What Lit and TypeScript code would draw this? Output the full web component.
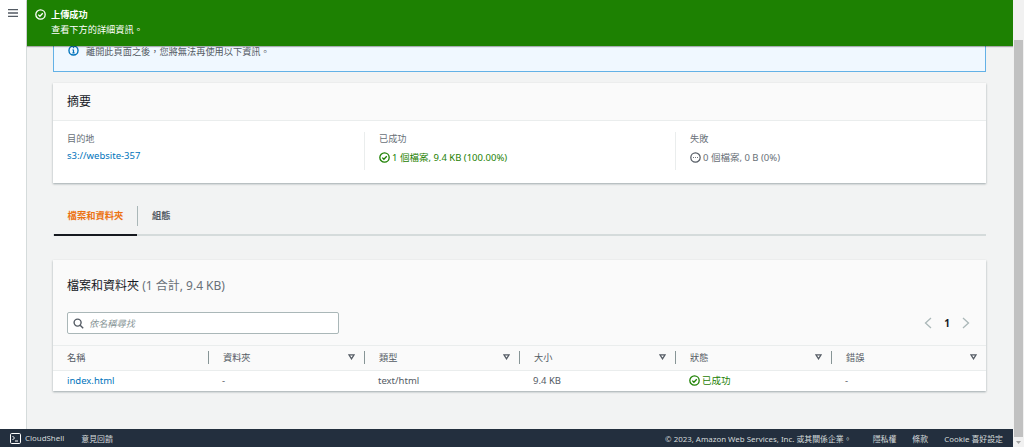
import { LitElement, html, css } from "lit";
import { customElement } from "lit/decorators.js";

const check = (color: string, size = 11) => html`<svg class="ic" width=${size} height=${size} viewBox="0 0 16 16" fill="none" stroke=${color} stroke-width="1.9"><circle cx="8" cy="8" r="6.8"/><path d="M4.8 8.2l2.3 2.3 4.2-4.4"/></svg>`;
const caret = html`<svg class="caret" width="7" height="6" viewBox="0 0 8 7" fill="none" stroke="#545b64" stroke-width="1.5"><path d="M1 1h6L4 5.6z"/></svg>`;

const cols = ["資料夾", "類型", "大小", "狀態", "錯誤"];

@customElement("app-root")
export class AppRoot extends LitElement {
  static styles = css`
    :host { display: block; width: 1024px; height: 447px; overflow: hidden; font-family: "Noto Sans", "Noto Sans CJK TC", sans-serif; font-size: 9.5px; color: #16191f; }
    .frame { display: flex; height: 447px; background: #f1f1f1; }
    .page { width: 1013px; display: flex; flex-direction: column; flex: none; }
    .scroll { flex: 1; display: flex; flex-direction: column; padding: 40px 1px 0 1px; box-sizing: border-box; }
    .thumb { flex: 1; background: #c1c1c1; }
    .arrow { height: 10px; display: flex; align-items: center; justify-content: center; }
    .body { flex: 1; min-height: 0; display: flex; position: relative; overflow: hidden; background: #f2f3f3; }
    .side { width: 26px; background: #fff; border-right: 1px solid #d5dbdb; flex: none; display: flex; justify-content: center; padding-top: 9px; }
    .main { flex: 1; min-width: 0; padding: 0 27px 0 26px; display: flex; flex-direction: column; }
    .flash { position: absolute; left: 27px; right: 0; top: 0; height: 46px; background: #1d8102; color: #fff; display: flex; gap: 5px; padding: 7px 0 0 8px; box-sizing: border-box; box-shadow: 0 1px 1px rgba(0,0,0,.3); font-size: 9.2px; }
    .flash .t { font-weight: 700; line-height: 15px; }
    .flash .d { line-height: 15px; }
    .flash .ic { margin-top: 2px; }
    .alert { height: 72px; box-sizing: border-box; flex: none; border: 1px solid #63b1e6; border-top: 0; background: #f0f8ff; display: flex; align-items: flex-start; gap: 7px; padding: 45px 0 0 14px; color: #545b64; line-height: 14px; font-size: 9.2px; }
    .card { background: #fff; box-shadow: 0 1px 2px rgba(0,28,36,.35); }
    .summary { margin-top: 11px; height: 100px; display: flex; flex-direction: column; }
    .chead { height: 38px; flex: none; background: #fafafa; border-bottom: 1px solid #eaeded; box-sizing: border-box; padding-left: 14px; font-size: 12px; line-height: 37px; }
    .cols { display: grid; grid-template-columns: repeat(3, 1fr); padding-top: 11px; }
    .col { height: 38px; box-sizing: border-box; padding: 1px 0 0 14px; border-left: 1px solid #eaeded; }
    .col:first-child { border-left: 0; }
    .lab { color: #687078; line-height: 12px; font-size: 9.2px; }
    .val { margin-top: 5px; line-height: 15px; display: flex; align-items: center; gap: 2px; }
    .val.dest { margin-top: 3px; }
    .link { color: #0073bb; }
    .ok { color: #1d8102; }
    .mut { color: #687078; }
    .tabs { margin-top: 23px; height: 30px; box-sizing: border-box; padding-left: 1px; display: flex; border-bottom: 2px solid #d5dbdb; flex: none; }
    .tab { width: 83px; height: 30px; box-sizing: border-box; flex: none; border-bottom: 2px solid #16191f; color: #ec7211; font-weight: 700; font-size: 9.3px; line-height: 20px; text-align: center; }
    .sep { width: 1px; height: 20px; background: #aab7b8; flex: none; }
    .tab2 { padding-left: 14px; color: #545b64; font-size: 9.3px; font-weight: 700; line-height: 20px; }
    .files { margin-top: 24px; height: 131px; display: flex; flex-direction: column; }
    .top { height: 85px; flex: none; background: #fafafa; padding: 0 14px; box-sizing: border-box; display: flex; flex-direction: column; }
    .title { margin-top: 18px; font-size: 12px; line-height: 16px; }
    .title span { color: #687078; }
    .tool { margin-top: 18px; display: flex; justify-content: space-between; align-items: center; }
    .search { width: 272px; height: 22px; box-sizing: border-box; background: #fff; border: 1px solid #aab7b8; border-radius: 2px; display: flex; align-items: center; gap: 5px; padding-left: 5px; color: #879596; font-style: italic; font-size: 9.2px; }
    .pager { display: flex; align-items: center; gap: 12px; font-weight: 700; font-size: 10px; margin-right: 2px; }
    .thead, .row { display: grid; grid-template-columns: 155px 156px 155px 156px 156px 1fr; align-items: center; }
    .thead { height: 26px; flex: none; padding-bottom: 2px; background: #fafafa; border-top: 1px solid #eaeded; border-bottom: 1px solid #eaeded; box-sizing: border-box; color: #545b64; font-size: 9.2px; }
    .th { display: flex; align-items: center; justify-content: space-between; height: 13px; padding: 0 9px 0 14px; border-left: 1px solid #879596; }
    .th:first-child { border-left: 0; }
    .row { height: 20px; box-sizing: border-box; padding-bottom: 2px; color: #545b64; }
    .td { padding-left: 14px; display: flex; align-items: center; gap: 2px; }
    .foot { height: 18px; flex: none; background: #232f3e; color: #d5dbdb; font-size: 7.9px; display: flex; align-items: center; padding: 0 10px; }
    .foot .cs { display: flex; align-items: center; gap: 4px; margin-right: 17px; }
    .foot .r { margin-left: auto; display: flex; gap: 16px; }
    .foot .copy { margin-right: 5px; }
    .ic, .caret { flex: none; }
  `;

  render() {
    return html`<div class="frame">
      <div class="page">
        <div class="body">
          <div class="side">
            <svg width="10" height="8" viewBox="0 0 10 8" fill="none" stroke="#545b64" stroke-width="1.3"><path d="M0 .7h10M0 4h10M0 7.3h10"/></svg>
          </div>
          <div class="main">
            <div class="alert">
              <svg class="ic info" width="11" height="11" viewBox="0 0 16 16" fill="none" stroke="#0073bb"><circle cx="8" cy="8" r="6.6" stroke-width="2"/><path d="M8 7v4.5M6.4 11.5h3.2M6.6 7H8" stroke-width="1.7"/><path d="M7 3.8h2" stroke-width="1.8"/></svg>
              <span>離開此頁面之後，您將無法再使用以下資訊。</span>
            </div>
            <div class="card summary">
              <div class="chead">摘要</div>
              <div class="cols">
                <div class="col"><div class="lab">目的地</div><div class="val dest link">s3://website-357</div></div>
                <div class="col"><div class="lab">已成功</div><div class="val ok">${check("#1d8102")}1 個檔案, 9.4 KB (100.00%)</div></div>
                <div class="col"><div class="lab">失敗</div><div class="val mut"><svg class="ic" width="11" height="11" viewBox="0 0 16 16" fill="none" stroke="#545b64" stroke-width="1.8"><circle cx="8" cy="8" r="6.8"/><path d="M4.6 8h1.2M7.4 8h1.2M10.2 8h1.2"/></svg>0 個檔案, 0 B (0%)</div></div>
              </div>
            </div>
            <div class="tabs">
              <div class="tab">檔案和資料夾</div>
              <div class="sep"></div>
              <div class="tab2">組態</div>
            </div>
            <div class="card files">
              <div class="top">
                <div class="title">檔案和資料夾 <span>(1 合計, 9.4 KB)</span></div>
                <div class="tool">
                  <div class="search">
                    <svg width="11" height="11" viewBox="0 0 11 11" fill="none" stroke="#545b64" stroke-width="1.4"><circle cx="4.6" cy="4.6" r="3.5"/><path d="M7.2 7.2l3 3"/></svg>
                    <span>依名稱尋找</span>
                  </div>
                  <div class="pager">
                    <svg width="8" height="12" viewBox="0 0 8 12" fill="none" stroke="#aab7b8" stroke-width="1.3"><path d="M7 1L1.5 6 7 11"/></svg>
                    <span>1</span>
                    <svg width="8" height="12" viewBox="0 0 8 12" fill="none" stroke="#aab7b8" stroke-width="1.3"><path d="M1 1l5.5 5L1 11"/></svg>
                  </div>
                </div>
              </div>
              <div class="thead">
                <div class="th">名稱</div>
                ${cols.map((c) => html`<div class="th"><span>${c}</span>${caret}</div>`)}
              </div>
              <div class="row">
                <div class="td link">index.html</div>
                <div class="td">-</div>
                <div class="td">text/html</div>
                <div class="td">9.4 KB</div>
                <div class="td ok">${check("#1d8102")}已成功</div>
                <div class="td">-</div>
              </div>
            </div>
          </div>
          <div class="flash">
            ${check("#fff", 11)}
            <div><div class="t">上傳成功</div><div class="d">查看下方的詳細資訊。</div></div>
          </div>
        </div>
        <div class="foot">
          <div class="cs">
            <svg width="11" height="11" viewBox="0 0 11 11" fill="none" stroke="#fff"><rect x="0.5" y="0.5" width="10" height="10" rx="1.2"/><path d="M2.5 3l2 2-2 2M5 8h3"/></svg>
            <span>CloudShell</span>
          </div>
          <span>意見回饋</span>
          <div class="r"><span class="copy">© 2023, Amazon Web Services, Inc. 或其關係企業。</span><span>隱私權</span><span>條款</span><span>Cookie 喜好設定</span></div>
        </div>
      </div>
      <div class="scroll">
        <div class="thumb"></div>
        <div class="arrow"><svg width="5" height="3" viewBox="0 0 5 3"><path d="M0 0h5L2.5 3z" fill="#a3a3a3"/></svg></div>
      </div>
    </div>`;
  }
}
